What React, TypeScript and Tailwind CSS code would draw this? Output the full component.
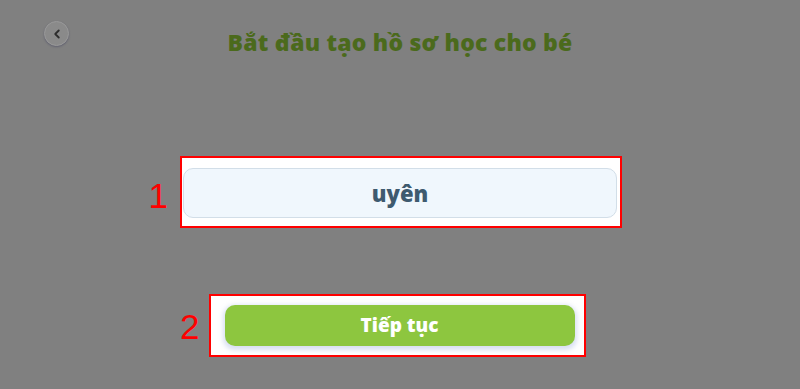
import { ChevronLeft } from 'lucide-react';

export default function App() {
  return (
    <div className="relative flex h-[389px] w-full flex-col items-center overflow-hidden bg-[#808080] font-['Open_Sans',sans-serif]">
      {/* Back button */}
      <button className="absolute left-[44px] top-[21px] flex h-[25px] w-[25px] items-center justify-center rounded-full border border-[#9a9a9a] bg-[#8a8a8a] shadow-[0_1px_2px_rgba(60,60,90,0.45)]">
        <ChevronLeft className="h-[14px] w-[14px] text-[#2e2e2e]" strokeWidth={3.2} />
      </button>

      {/* Title */}
      <h1 className="mt-[27px] text-[23px] font-extrabold leading-[30px] tracking-[0.2px] text-[#4b6a1c]">
        Bắt đầu tạo hồ sơ học cho bé
      </h1>

      {/* Step 1: name field */}
      <div className="relative mt-[99px] ml-[2px]">
        <span className="absolute right-full top-[20px] mr-[12px] font-['Liberation_Sans',sans-serif] text-[35px] leading-[40px] text-[#ff0000]">
          1
        </span>
        <div className="w-[442px] border-2 border-[#ff0000] bg-white pb-[8px] pl-[1px] pr-[2px] pt-[10px]">
          <div className="flex h-[50px] w-[434px] items-center justify-center rounded-[10px] border-[1.5px] border-[#d2dee8] bg-[#f0f7fd]">
            <span className="text-[22px] font-extrabold text-[#3e5a6f]">uyên</span>
          </div>
        </div>
      </div>

      {/* Step 2: continue button */}
      <div className="relative mt-[66px] mr-[6px]">
        <span className="absolute right-full top-[13px] mr-[9px] font-['Liberation_Sans',sans-serif] text-[35px] leading-[40px] text-[#ff0000]">
          2
        </span>
        <div className="w-[377px] border-2 border-[#ff0000] bg-white pb-[9px] pl-[14px] pr-[9px] pt-[9px]">
          <button className="flex h-[41px] w-[350px] items-center justify-center rounded-[10px] bg-[#8dc63f] shadow-[0_2px_5px_2px_rgba(200,210,235,0.7)]">
            <span className="text-[19px] font-extrabold text-white">Tiếp tục</span>
          </button>
        </div>
      </div>
    </div>
  );
}
